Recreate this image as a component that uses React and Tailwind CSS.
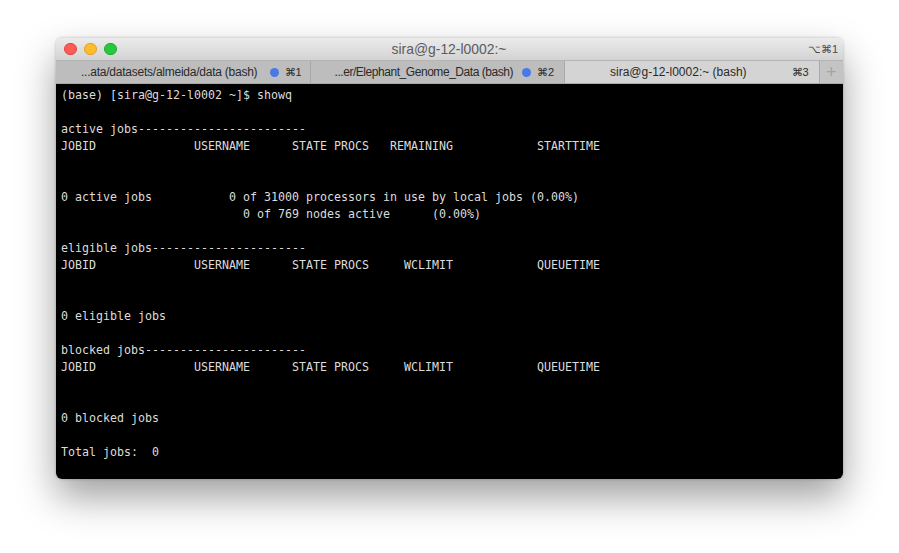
import React from "react";

const lines = [
  "(base) [sira@g-12-l0002 ~]$ showq",
  "",
  "active jobs------------------------",
  "JOBID              USERNAME      STATE PROCS   REMAINING            STARTTIME",
  "",
  "",
  "0 active jobs           0 of 31000 processors in use by local jobs (0.00%)",
  "                          0 of 769 nodes active      (0.00%)",
  "",
  "eligible jobs----------------------",
  "JOBID              USERNAME      STATE PROCS     WCLIMIT            QUEUETIME",
  "",
  "",
  "0 eligible jobs",
  "",
  "blocked jobs-----------------------",
  "JOBID              USERNAME      STATE PROCS     WCLIMIT            QUEUETIME",
  "",
  "",
  "0 blocked jobs",
  "",
  "Total jobs:  0",
];

function Tab({ title, shortcut, dot, active, textClass, endClass }) {
  return (
    <div
      className={`flex h-full w-[254.5px] items-center border-r border-[#a9a9a9] ${
        active ? "bg-[#d4d4d4]" : "bg-[#bdbdbd]"
      }`}
    >
      <span className={`${textClass} whitespace-nowrap text-[#2a2a2a]`}>{title}</span>
      <div className={`ml-auto flex items-center ${endClass}`}>
        {dot && <span className="mr-[6px] h-[9px] w-[9px] rounded-full bg-[#4a78e4]" />}
        <span className="w-[15px] whitespace-nowrap text-[11px] text-[#2a2a2a]">{shortcut}</span>
      </div>
    </div>
  );
}

export default function App() {
  return (
    <div className="h-[553px] w-[899px] overflow-hidden bg-white pl-[56px] pt-[38px] font-['Liberation_Sans',sans-serif]">
      <div className="flex h-[441px] w-[787px] flex-col overflow-hidden rounded-[6px] shadow-[0_18px_38px_rgba(0,0,0,0.38),0_0_3px_rgba(0,0,0,0.25)]">
        {/* title bar */}
        <div className="flex h-[23px] shrink-0 items-center border-b border-[#b4b4b4] bg-gradient-to-b from-[#ebebeb] to-[#d3d3d3] pl-[8px] pr-[5px]">
          <div className="flex w-[200px] items-center gap-[7.5px]">
            <span className="h-[12.5px] w-[12.5px] rounded-full border border-[#e0443e] bg-[#fc5b57]" />
            <span className="h-[12.5px] w-[12.5px] rounded-full border border-[#dea123] bg-[#fdbc2e]" />
            <span className="h-[12.5px] w-[12.5px] rounded-full border border-[#1aab29] bg-[#27c83f]" />
          </div>
          <div className="flex-1 pr-[4px] text-center text-[13.9px] text-[#5c5c5c]">sira@g-12-l0002:~</div>
          <div className="w-[200px] text-right text-[11px] text-[#4a4a4a]">⌥⌘1</div>
        </div>

        {/* tabs */}
        <div className="flex h-[23px] shrink-0 items-center border-b border-[#a9a9a9] bg-[#bdbdbd] text-[12px]">
          <Tab title="...ata/datasets/almeida/data (bash)" shortcut="⌘1" dot textClass="pl-[25px] tracking-[-0.24px]" endClass="pr-[10px]" />
          <Tab title="...er/Elephant_Genome_Data (bash)" shortcut="⌘2" dot textClass="pl-[24px] tracking-[-0.45px]" endClass="pr-[12px]" />
          <Tab title="sira@g-12-l0002:~ (bash)" shortcut="⌘3" active textClass="pl-[45px]" endClass="pr-[12px]" />
          <div className="flex h-full flex-1 items-center justify-center bg-[#c4c4c4] text-[18px] font-light text-[#a4a4a4]">+</div>
        </div>

        {/* terminal output */}
        <div className="flex-1 bg-black pl-[5px] pt-[3px] font-['DejaVu_Sans_Mono',monospace] text-[11.63px] leading-[17px] text-[#dcdcdc]">
          {lines.map((line, i) => (
            <div key={i} className="h-[17px] whitespace-pre">
              {line}
            </div>
          ))}
        </div>
      </div>
    </div>
  );
}
